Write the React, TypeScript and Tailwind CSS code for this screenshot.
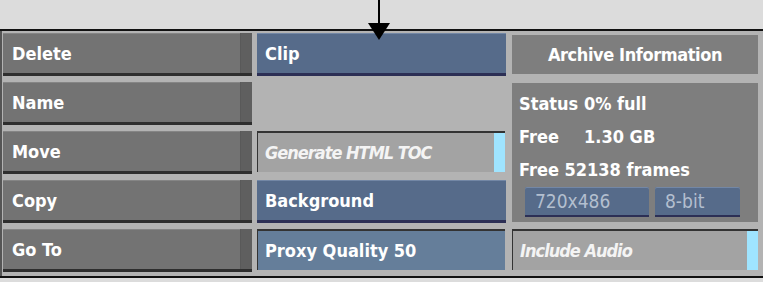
const font = "font-['DejaVu_Sans_Condensed','DejaVu_Sans',sans-serif]";

function GrayButton({ label }: { label: string }) {
  return (
    <div className="flex h-[43px] border-b-[3px] border-[#2e2e2e] bg-[#737373] shadow-[inset_0_1px_0_#858585]">
      <div className="flex flex-1 items-center pl-[9px] text-[18px] font-bold text-white">{label}</div>
      <div className="w-[12px] border-l border-[#595959] bg-[#5f5f5f]" />
    </div>
  );
}

function BlueButton({ label }: { label: string }) {
  return (
    <div className="mr-[1px] flex h-[43px] items-center border-b-[3px] border-[#2c2f55] bg-[#566b8a] pl-[8px] text-[18px] font-bold text-white shadow-[inset_0_1px_0_#7387a5]">
      {label}
    </div>
  );
}

function Toggle({ label }: { label: string }) {
  return (
    <div className="mr-[2px] flex h-[41px] border-l border-t-2 border-[#333] bg-[#a3a3a3]">
      <div className="flex flex-1 items-center pl-[7px] text-[18px] font-bold italic tracking-[-1px] text-[#f4f4f4]">{label}</div>
      <div className="w-[11px] bg-[#9fe4ff]" />
    </div>
  );
}

function SmallButton({ label, width }: { label: string; width: string }) {
  return (
    <div className={`flex h-[30px] items-center rounded-t-[2px] border-b-2 border-[#2c2f55] bg-[#566b8a] pl-[10px] text-[19px] font-normal text-[#b3bfcf] shadow-[inset_0_1px_0_#7387a5] ${width}`}>
      {label}
    </div>
  );
}

export default function App() {
  return (
    <div className={`relative flex h-[282px] w-[763px] flex-col bg-[#dcdcdc] ${font}`}>
      <div className="h-[29px]" />
      <div className="h-[2px] bg-[#111]" />

      <div className="grid h-[245px] grid-cols-[249px_250px_248px] grid-rows-[repeat(5,43px)] gap-x-[5px] gap-y-[6px] border-l-2 border-[#555] bg-[#b3b3b3] pl-[1px] pt-[2px]">
        <GrayButton label="Delete" />
        <BlueButton label="Clip" />
        <div className="my-[2px] mr-[2px] flex items-center justify-center bg-[#7e7e7e] text-[18px] font-bold tracking-[-0.4px] text-white">
          Archive Information
        </div>

        <GrayButton label="Name" />
        <div />
        <div className="row-span-3 mb-[1px] mr-[2px] mt-[1px] flex flex-col bg-[#7e7e7e] pl-[7px] pt-[4px] text-[18px] font-bold leading-[33px] text-white">
          <div>Status 0% full</div>
          <div className="flex">
            <span className="w-[65px]">Free</span>
            <span>1.30 GB</span>
          </div>
          <div>Free 52138 frames</div>
          <div className="ml-[6px] mt-[1px] flex gap-[6px]">
            <SmallButton label="720x486" width="w-[124px]" />
            <SmallButton label="8-bit" width="w-[85px]" />
          </div>
        </div>

        <GrayButton label="Move" />
        <Toggle label="Generate HTML TOC" />

        <GrayButton label="Copy" />
        <BlueButton label="Background" />

        <GrayButton label="Go To" />
        <div className="mr-[2px] flex h-[41px] items-center border-l border-t-2 border-[#333] bg-[#657e9a] pl-[7px] text-[18px] font-bold text-white">
          Proxy Quality 50
        </div>
        <Toggle label="Include Audio" />
      </div>

      <div className="h-[2px] bg-[#111]" />
      <div className="flex-1" />

      <svg className="pointer-events-none absolute left-0 top-0" width="763" height="50" viewBox="0 0 763 50">
        <line x1="379" y1="0" x2="379" y2="25" stroke="#000" strokeWidth="2" />
        <polygon points="368,23 390,23 379,40" fill="#000" />
      </svg>
    </div>
  );
}
